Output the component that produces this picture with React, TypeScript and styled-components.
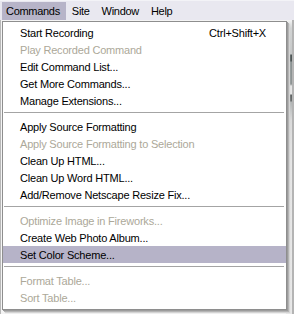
import React from "react";
import styled, { createGlobalStyle } from "styled-components";

const GlobalStyle = createGlobalStyle`
  html, body { margin: 0; padding: 0; background: #ffffff; }
  body { font-family: "Liberation Sans", Arial, sans-serif; }
`;

const Screen = styled.div`
  position: relative;
  width: 294px;
  height: 314px;
  overflow: hidden;
  display: flex;
  flex-direction: column;
  font-family: "Liberation Sans", Arial, sans-serif;
  font-size: 11px;
  letter-spacing: -0.2px;
`;

const MenuBar = styled.div`
  height: 20px;
  flex: none;
  display: flex;
  align-items: stretch;
  padding: 1px 0 0 2px;
  box-sizing: border-box;
  background: #e9e8f0;
  border-top: 1px solid #f3f3f7;
`;

const BarItem = styled.div<{ $open?: boolean }>`
  display: flex;
  align-items: center;
  padding: 0 6px 0 ${(p) => (p.$open ? "4px" : "6px")};
  color: #000;
  background: ${(p) => (p.$open ? "#b7b4c8" : "transparent")};
  font-size: 11px;
  letter-spacing: -0.3px;
`;

const Workspace = styled.div`
  flex: 1;
  display: flex;
  background: #f4f4f4;
  border-left: 1px solid #b8b8b8;
`;

const DocArea = styled.div`
  flex: 1;
`;

const SidePanel = styled.div`
  width: 6px;
  background: linear-gradient(
    to bottom,
    #f4f4f4 0px,
    #d2d4d4 8px,
    #c4c6c6 34px,
    #4e5656 35px,
    #4e5656 41px,
    #8a9292 42px,
    #8e9494 64px,
    #e6e6e6 66px,
    #e6e6e6 74px,
    #5e6262 75px,
    #6a6e6e 81px,
    #b0b4b4 82px,
    #dadada 100px,
    #e6e6e6 140px,
    #e8e8e8 100%
  );
  border-right: 2px solid #b4b4b4;
`;

const Dropdown = styled.div`
  position: absolute;
  top: 21px;
  left: 2px;
  width: 285px;
  box-sizing: border-box;
  background: #ffffff;
  border: 1px solid #8e8e8e;
  padding: 2px 0 3px 0;
  box-shadow: 1px 1px 0 #9c9c9c, 2px 2px 0 #b4b4b4, 3px 3px 1px #d4d4d4;
  display: flex;
  flex-direction: column;
`;

const Item = styled.div<{ $disabled?: boolean; $active?: boolean }>`
  height: 17px;
  display: flex;
  align-items: center;
  justify-content: space-between;
  padding: 0 20px 0 17px;
  color: ${(p) => (p.$disabled ? "#aca899" : "#000000")};
  background: ${(p) => (p.$active ? "#b6b3c8" : "transparent")};
  white-space: nowrap;
`;

const Shortcut = styled.span`
  color: inherit;
`;

const Separator = styled.div`
  height: 9px;
  display: flex;
  align-items: flex-start;
  padding: 3px 2px 0 1px;
  box-sizing: border-box;
  &::after {
    content: "";
    flex: 1;
    height: 1px;
    background: #a4a4a4;
  }
`;

type Entry =
  | { kind: "item"; label: string; shortcut?: string; disabled?: boolean; active?: boolean }
  | { kind: "sep" };

const entries: Entry[] = [
  { kind: "item", label: "Start Recording", shortcut: "Ctrl+Shift+X" },
  { kind: "item", label: "Play Recorded Command", disabled: true },
  { kind: "item", label: "Edit Command List..." },
  { kind: "item", label: "Get More Commands..." },
  { kind: "item", label: "Manage Extensions..." },
  { kind: "sep" },
  { kind: "item", label: "Apply Source Formatting" },
  { kind: "item", label: "Apply Source Formatting to Selection", disabled: true },
  { kind: "item", label: "Clean Up HTML..." },
  { kind: "item", label: "Clean Up Word HTML..." },
  { kind: "item", label: "Add/Remove Netscape Resize Fix..." },
  { kind: "sep" },
  { kind: "item", label: "Optimize Image in Fireworks...", disabled: true },
  { kind: "item", label: "Create Web Photo Album..." },
  { kind: "item", label: "Set Color Scheme...", active: true },
  { kind: "sep" },
  { kind: "item", label: "Format Table...", disabled: true },
  { kind: "item", label: "Sort Table...", disabled: true },
];

export default function App() {
  return (
    <>
      <GlobalStyle />
      <Screen>
        <MenuBar>
          <BarItem $open>Commands</BarItem>
          <BarItem>Site</BarItem>
          <BarItem>Window</BarItem>
          <BarItem>Help</BarItem>
        </MenuBar>
        <Workspace>
          <DocArea />
          <SidePanel />
        </Workspace>
        <Dropdown>
          {entries.map((e, i) =>
            e.kind === "sep" ? (
              <Separator key={i} />
            ) : (
              <Item key={i} $disabled={e.disabled} $active={e.active}>
                <span>{e.label}</span>
                {e.shortcut && <Shortcut>{e.shortcut}</Shortcut>}
              </Item>
            )
          )}
        </Dropdown>
      </Screen>
    </>
  );
}
